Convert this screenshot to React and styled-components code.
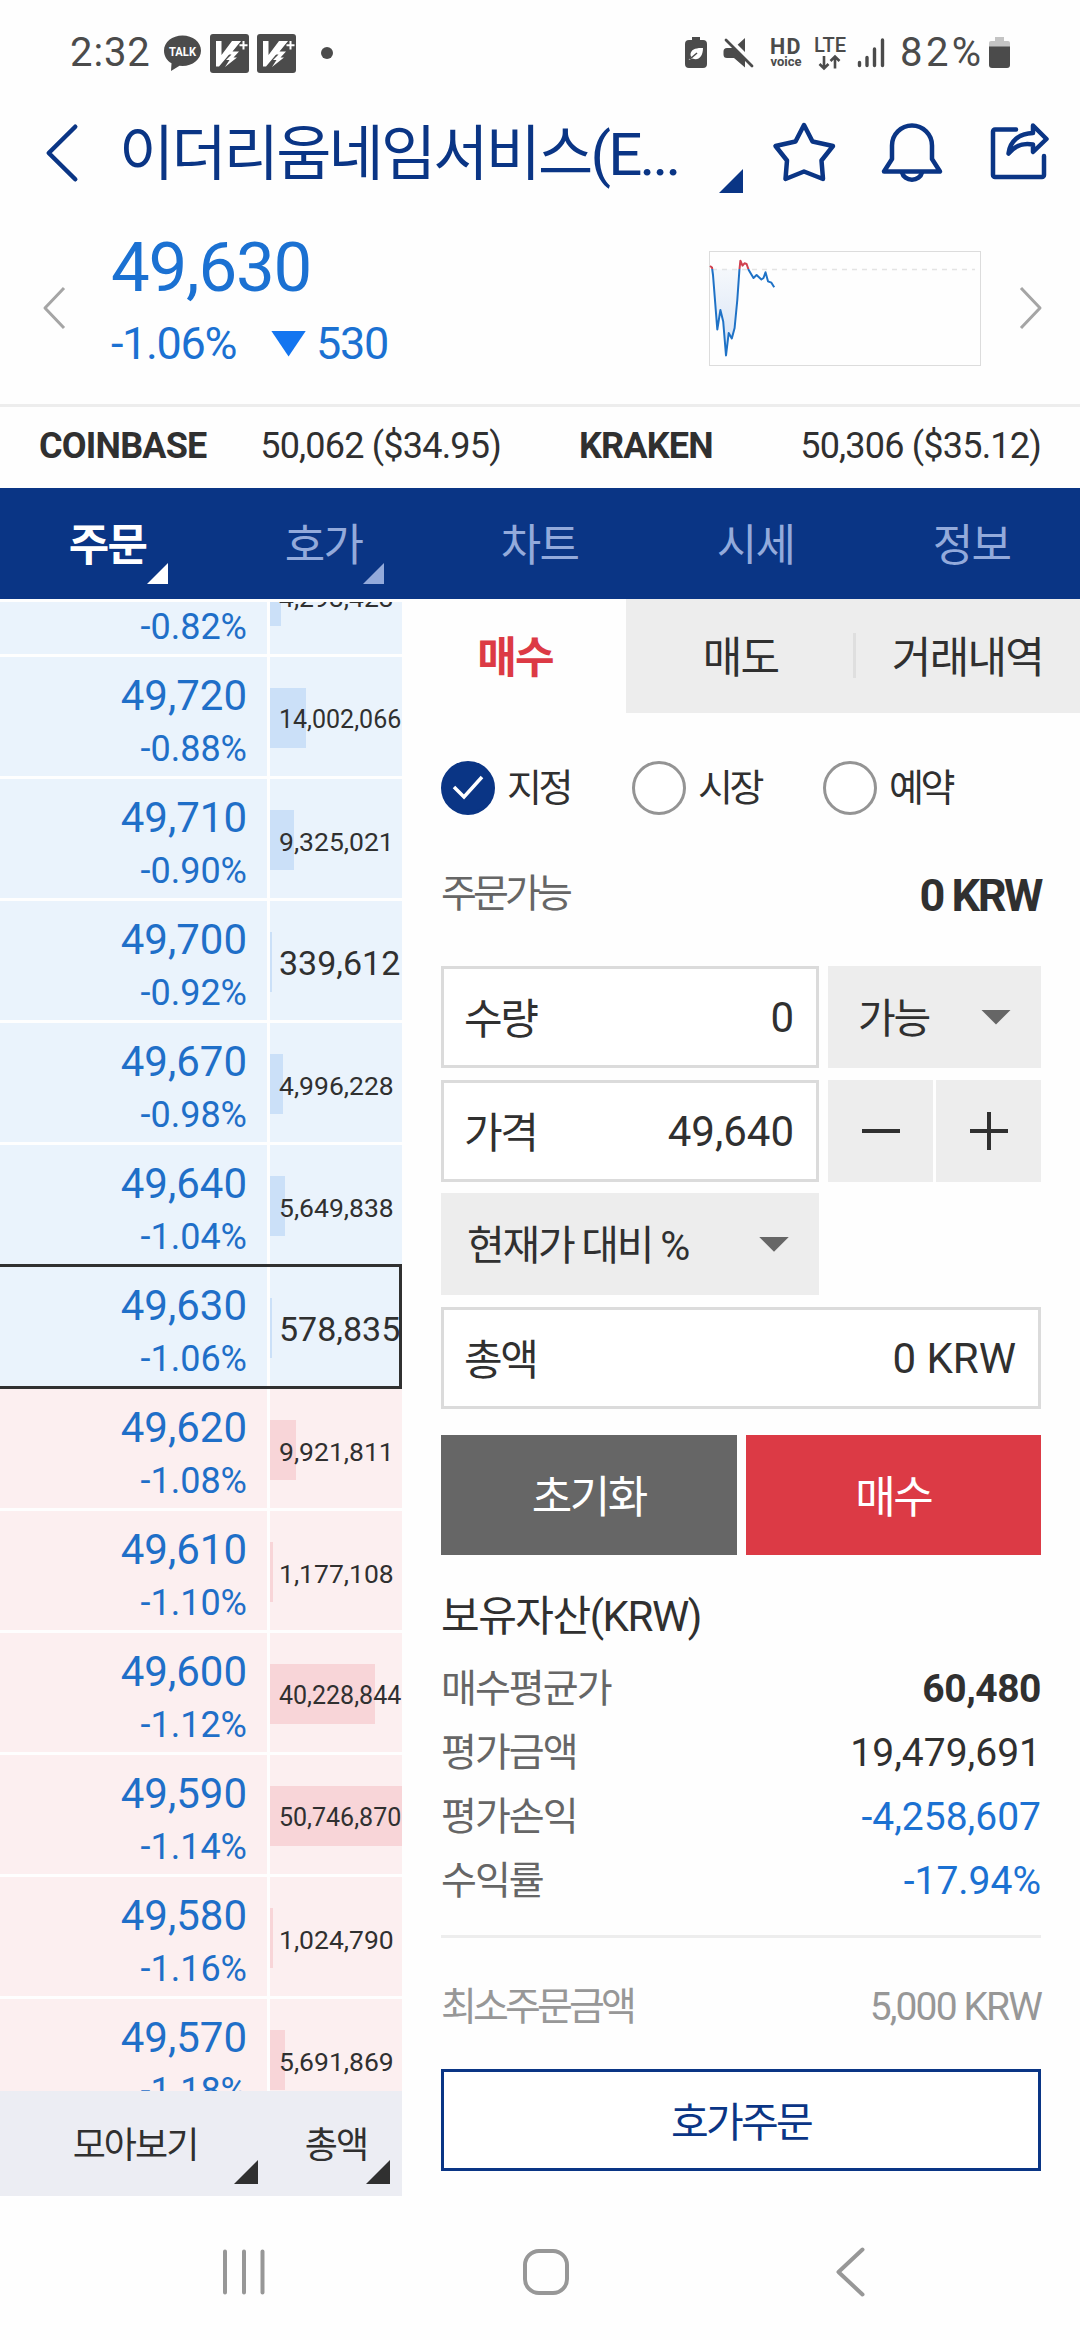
import { useState } from 'react';

import styled, { createGlobalStyle } from 'styled-components';

const GlobalStyle = createGlobalStyle`
  * {
    box-sizing: border-box;
  }

  body {
    margin: 0;
    background: #fdfdfd;
  }

  button {
    background: none;
    border: none;
    padding: 0;
    margin: 0;
    font: inherit;
    color: inherit;
    cursor: pointer;
  }

  svg {
    display: block;
    flex-shrink: 0;
    overflow: visible;
  }
`;

const Screen = styled.div`
  --navy: #0a3585;
  --blue: #1b71d2;
  --red: #dc3a45;
  --ink: #303030;

  display: flex;
  flex-direction: column;
  width: 1080px;
  height: 2340px;
  overflow: hidden;
  background: #fefefe;
  color: var(--ink);
  font-family: Roboto, 'Noto Sans CJK KR', sans-serif;
`;

/* ---------- status bar ---------- */

const StatusBar = styled.div`
  display: flex;
  align-items: center;
  justify-content: space-between;
  height: 106px;
  padding: 0 70px 0 70px;
  color: #4b4b4b;
`;

const StatusGroup = styled.div`
  display: flex;
  align-items: center;
`;

const StatusText = styled.span`
  font-size: 40px;
  line-height: 40px;
  letter-spacing: ${({ $spacing }) => $spacing}px;
  width: ${({ $width }) => $width}px;
  white-space: nowrap;
`;

const IconSlot = styled.span`
  display: flex;
  margin-left: ${({ $gap }) => $gap}px;
`;

const HdVoice = styled.span`
  display: flex;
  flex-direction: column;
  align-items: center;
  width: 34px;
  margin-left: 15px;
  font-weight: 700;
  font-size: 21.5px;
  line-height: 17px;
  letter-spacing: 1.5px;

  small {
    font-size: 13px;
    line-height: 13px;
    letter-spacing: 0;
  }
`;

/* ---------- title and price ---------- */

const TitleBar = styled.header`
  display: flex;
  align-items: center;
  height: 94px;
  padding: 0 27px 0 46px;
  color: var(--navy);
`;

const Title = styled.button`
  position: relative;
  width: 624px;
  height: 94px;
  margin-left: 41px;
  margin-right: 1px;
  font-size: 60px;
  line-height: 98px;
  letter-spacing: -0.047em;
  text-align: left;
  white-space: nowrap;
`;

const Corner = styled.i`
  position: absolute;
  right: ${({ $right = 0 }) => $right}px;
  bottom: ${({ $bottom = 0 }) => $bottom}px;
  width: ${({ $size = 24 }) => $size}px;
  height: ${({ $size = 24 }) => $size}px;
  background: currentColor;
  clip-path: polygon(100% 0, 100% 100%, 0 100%);
`;

const TitleActions = styled.div`
  display: flex;
  align-items: center;
  gap: 46px;
  margin-left: 29px;
`;

const PriceBar = styled.section`
  display: flex;
  align-items: center;
  height: 207px;
  padding: 12px 38px 0 43px;
  border-bottom: 3px solid #ededed;
`;

const PriceBlock = styled.div`
  flex: 1;
  margin: 0 0 5px 45px;
  color: var(--blue);
`;

const Price = styled.div`
  font-size: 69px;
  line-height: 76px;
  letter-spacing: -0.018em;
`;

const PriceChange = styled.div`
  display: flex;
  align-items: center;
  font-size: 45px;
  line-height: 76px;
  letter-spacing: -0.03em;
`;

const DownArrow = styled.i`
  width: ${({ $width }) => $width}px;
  height: ${({ $height }) => $height}px;
  background: ${({ $color }) => $color};
  clip-path: polygon(0 0, 100% 0, 50% 100%);
`;

const ExchangeBar = styled.section`
  display: flex;
  height: 81px;
`;

const Exchange = styled.div`
  display: flex;
  justify-content: space-between;
  width: 540px;
  padding: 0 39px;
  font-size: 36px;
  line-height: 78px;
  letter-spacing: -0.022em;
`;

/* ---------- main tabs ---------- */

const MainTabs = styled.nav`
  display: flex;
  height: 111px;
  background: var(--navy);
`;

const MainTab = styled.button`
  position: relative;
  flex: 1;
  height: 111px;
  padding: 3px 1px 0 0;
  font-size: 44px;
  line-height: 111px;
  letter-spacing: -0.04em;
  font-weight: ${({ $active }) => ($active ? 700 : 400)};
  color: ${({ $active }) => ($active ? '#fff' : '#93aadb')};
`;

const Body = styled.main`
  display: flex;
  height: 1597px;
`;

/* ---------- order book ---------- */

const Book = styled.section`
  display: flex;
  flex-direction: column;
  width: 402px;
  padding-top: 3px;
`;

const BookClip = styled.div`
  height: 1489px;
  overflow: hidden;
`;

const BookList = styled.div`
  display: flex;
  flex-direction: column;
  gap: 3px;
  margin-top: -67px;
`;

const BookRow = styled.div`
  position: relative;
  display: grid;
  grid-template-columns: 267px 132px;
  column-gap: 3px;
  height: 119px;
  flex-shrink: 0;
`;

const CurrentFrame = styled.div`
  position: absolute;
  inset: -3px 0 -3px -3px;
  border: 3px solid #303030;
`;

const PriceCell = styled.div`
  display: flex;
  flex-direction: column;
  align-items: flex-end;
  padding: 13px 20px 0 0;
  background: ${({ $side }) => ($side === 'ask' ? '#eaf3fc' : '#fceff0')};
  color: #1f6fc8;
`;

const RowPrice = styled.span`
  height: 52px;
  font-size: 42px;
  line-height: 52px;
`;

const RowRate = styled.span`
  font-size: 36px;
  line-height: 54px;
`;

const VolumeCell = styled.div`
  position: relative;
  display: flex;
  align-items: center;
  padding: 5px 0 0 9px;
  background: ${({ $side }) => ($side === 'ask' ? '#eaf3fc' : '#fceff0')};
  font-size: ${({ $length }) => (
    $length > 9 ? 25 : $length > 7 ? 26.5 : 34
  )}px;
  overflow: hidden;
`;

const VolumeBar = styled.i`
  position: absolute;
  left: 0;
  top: 31px;
  height: 60px;
  background: ${({ $side }) => ($side === 'ask' ? '#cbe0f8' : '#f8d5d8')};
`;

const VolumeText = styled.span`
  position: relative;
`;

const BookFooter = styled.div`
  display: flex;
  height: 105px;
  background: #ecedf3;
`;

const FooterButton = styled.button`
  position: relative;
  width: ${({ $width }) => $width}px;
  height: 105px;
  padding-top: 3px;
  font-size: 36px;
  line-height: 105px;
  letter-spacing: -0.055em;
`;

/* ---------- order form ---------- */

const OrderPanel = styled.section`
  flex: 1;
`;

const SideTabs = styled.div`
  display: flex;
  height: 114px;
`;

const SideTab = styled.button`
  position: relative;
  flex: ${({ $active }) => ($active ? '0 0 224px' : '1')};
  padding: 0 0 4px 2px;
  background: ${({ $active }) => ($active ? 'transparent' : '#ededed')};
  color: ${({ $active }) => ($active ? 'var(--red)' : 'inherit')};
  font-size: 43px;
  font-weight: ${({ $active }) => ($active ? 700 : 400)};
  letter-spacing: -0.04em;
`;

const TabDivider = styled.i`
  position: absolute;
  left: 0;
  top: 34px;
  width: 3px;
  height: 45px;
  background: #dfdfdf;
`;

const OrderForm = styled.div`
  padding: 0 39px;
`;

const OrderTypes = styled.div`
  display: flex;
  margin-top: 48px;
`;

const OrderType = styled.button`
  display: flex;
  align-items: center;
  gap: 12px;
  width: 191px;
  height: 54px;
  font-size: 38px;
  line-height: 58px;
  letter-spacing: -0.09em;
`;

const Radio = styled.span`
  display: flex;
  align-items: center;
  justify-content: center;
  width: 54px;
  height: 54px;
  border: 3px solid ${({ $checked }) => ($checked ? 'var(--navy)' : '#949494')};
  border-radius: 50%;
  background: ${({ $checked }) => ($checked ? 'var(--navy)' : '#fff')};
`;

const Available = styled.div`
  display: flex;
  justify-content: space-between;
  align-items: center;
  margin: 51px 0 42px;
  height: 58px;
  font-size: 39px;
  letter-spacing: -0.1em;
  color: #666;

  span {
    margin-bottom: 11px;
  }

  strong {
    font-size: 45px;
    letter-spacing: -0.055em;
    color: var(--ink);
  }
`;

const Fields = styled.div`
  display: grid;
  grid-template-columns: 378px 213px;
  column-gap: 9px;
  row-gap: 11.67px;
`;

const Field = styled.label`
  display: flex;
  align-items: center;
  justify-content: space-between;
  grid-column: ${({ $wide }) => ($wide ? '1 / -1' : 'auto')};
  height: 102px;
  padding: 1px 22px 0 20px;
  border: 3px solid #dbdbdb;
  font-size: 42px;
  background: #fff;
`;

const FieldLabel = styled.span`
  margin-bottom: 4px;
  letter-spacing: -0.055em;
  white-space: pre;
`;

const Select = styled.button`
  display: flex;
  align-items: center;
  justify-content: space-between;
  height: 102px;
  padding: 0 30px 0 ${({ $left }) => $left}px;
  background: #ededed;
  font-size: 41px;
`;

const Stepper = styled.div`
  display: grid;
  grid-template-columns: 1fr 1fr;
  gap: 3px;
`;

const StepButton = styled.button`
  display: flex;
  align-items: center;
  justify-content: center;
  background: #ededed;
`;

const Actions = styled.div`
  display: grid;
  grid-template-columns: 1fr 1fr;
  gap: 9px;
  margin-top: 26px;
`;

const ActionButton = styled.button`
  height: 120px;
  padding-bottom: 2px;
  font-size: 44px;
  letter-spacing: -0.055em;
  background: ${({ $primary }) => ($primary ? 'var(--red)' : '#666')};
  color: #fff;
`;

const HoldingsTitle = styled.h2`
  margin: 31px 0 9px;
  font-size: 42px;
  line-height: 62px;
  font-weight: 400;
  letter-spacing: -0.035em;
`;

const InfoRow = styled.div`
  display: flex;
  justify-content: space-between;
  font-size: 39px;
  line-height: 64px;
  color: ${({ $muted }) => ($muted ? '#979797' : '#666')};
  letter-spacing: ${({ $muted }) => ($muted ? '-0.1em' : '-0.05em')};
`;

const InfoValue = styled.span`
  color: ${({ $color }) => $color};
  font-weight: ${({ $bold }) => ($bold ? 700 : 400)};
  letter-spacing: ${({ $tight, $bold }) => (
    $tight ? '-0.048em' : $bold ? '-0.012em' : '0'
  )};
`;

const Divider = styled.hr`
  height: 3px;
  margin: 22px 0 37px;
  border: none;
  background: #ededed;
`;

const BookOrderButton = styled.button`
  display: block;
  width: 100%;
  height: 102px;
  margin-top: 30px;
  padding-bottom: 2px;
  border: 3px solid var(--navy);
  color: var(--navy);
  background: #fff;
  font-size: 41px;
  letter-spacing: -0.065em;
`;

/* ---------- system navigation ---------- */

const SystemNav = styled.footer`
  display: flex;
  align-items: center;
  height: 144px;
  padding: 8px 0 0 221px;
`;

const SystemButton = styled.button`
  margin-right: ${({ $gap = 0 }) => $gap}px;
`;

const MAX_VOLUME = 50746870;

// the first row is scrolled half out of view, only its rate shows
const orders = [
  { side: 'ask', rate: '-0.82%', volume: 4293423 },
  { side: 'ask', price: '49,720', rate: '-0.88%', volume: 14002066 },
  { side: 'ask', price: '49,710', rate: '-0.90%', volume: 9325021 },
  { side: 'ask', price: '49,700', rate: '-0.92%', volume: 339612 },
  { side: 'ask', price: '49,670', rate: '-0.98%', volume: 4996228 },
  { side: 'ask', price: '49,640', rate: '-1.04%', volume: 5649838 },
  { side: 'ask', price: '49,630', rate: '-1.06%', volume: 578835 },
  { side: 'bid', price: '49,620', rate: '-1.08%', volume: 9921811 },
  { side: 'bid', price: '49,610', rate: '-1.10%', volume: 1177108 },
  { side: 'bid', price: '49,600', rate: '-1.12%', volume: 40228844 },
  { side: 'bid', price: '49,590', rate: '-1.14%', volume: 50746870 },
  { side: 'bid', price: '49,580', rate: '-1.16%', volume: 1024790 },
  { side: 'bid', price: '49,570', rate: '-1.18%', volume: 5691869 },
];

const holdings = [
  { label: '매수평균가', value: '60,480', color: '#303030', bold: true },
  { label: '평가금액', value: '19,479,691', color: '#303030' },
  { label: '평가손익', value: '-4,258,607', color: '#1b71d2' },
  { label: '수익률', value: '-17.94%', color: '#1b71d2' },
];

const mainTabs = ['주문', '호가', '차트', '시세', '정보'];
const sideTabs = ['매수', '매도', '거래내역'];
const orderTypes = ['지정', '시장', '예약'];

function TalkIcon() {
  return (
    <svg width="37" height="37" viewBox="0 0 37 37">
      <path
        d="M18.500 0.500C8.300 0.500 0 7.100 0 15.700c0 5.400 2.800 9.800 7.500 12.500L7 36l8.500-5.300 3 .2C28.700 30.900 37 24.300 37 15.700S28.700 0.500 18.500 0.500Z"
        fill="#4b4b4b"
      />
      <text
        x="5"
        y="20.500"
        fontSize="13"
        fontWeight="700"
        textLength="27"
        lengthAdjust="spacingAndGlyphs"
        fill="#fff"
      >
        TALK
      </text>
    </svg>
  );
}

function V3Icon() {
  return (
    <svg width="39" height="39" viewBox="0 0 39 39">
      <rect width="39" height="39" rx="3" fill="#4b4b4b" />
      <path d="M6 7h5.500v14L22 7h8.500L9 32.500H6Z" fill="#fff" />
      <path
        d="M31 7L22.500 17.500H29L23.500 23.500H27L15 33L19.500 26H16L21.500 20.500H16L27 7Z"
        fill="#fff"
      />
      <path d="M33.500 7v8.500M29.500 11.200h8" stroke="#4b4b4b" strokeWidth="4" />
      <path d="M33.500 7v8.500M29.500 11.200h8" stroke="#fff" strokeWidth="2" />
    </svg>
  );
}

function PowerSaveIcon() {
  return (
    <svg width="22" height="32" viewBox="0 0 22 32">
      <path
        d="M7 0h8v3h3a4 4 0 0 1 4 4v20a4 4 0 0 1-4 4H4a4 4 0 0 1-4-4V7a4 4 0 0 1 4-4h3Z"
        fill="#4b4b4b"
      />
      <path
        d="M18 11c-7-.5-12 1.500-12.500 6-.1 1.500.5 2.500 1 3L3.500 23l4-1.500C13 24 18 20 18 11Z"
        fill="#fff"
      />
      <path d="M5 22l7-6" stroke="#4b4b4b" strokeWidth="1.500" />
    </svg>
  );
}

function MuteIcon() {
  return (
    <svg width="31" height="30" viewBox="0 0 31 30">
      <path
        d="M22 0v29.500L11 20H4a3.500 3.500 0 0 1-3.500-3.500v-3A3.500 3.500 0 0 1 4 10h7Z"
        fill="#4b4b4b"
      />
      <path d="M4.500-.5l28 28" stroke="#fefefe" strokeWidth="4" />
      <path
        d="M3 2l26 26"
        stroke="#4b4b4b"
        strokeWidth="2.800"
        strokeLinecap="round"
      />
    </svg>
  );
}

function LteIcon() {
  return (
    <svg width="32" height="34" viewBox="0 0 32 34" fill="#4b4b4b">
      <text
        x="0"
        y="15.500"
        fontSize="20.500"
        fontWeight="500"
        textLength="32"
        lengthAdjust="spacingAndGlyphs"
      >
        LTE
      </text>
      <path
        d="M10 20v12M5.500 28l4.500 4.500 4.500-4.500M21 32.500V20.500M16.500 25l4.500-4.500 4.500 4.500"
        stroke="#4b4b4b"
        strokeWidth="2.600"
        fill="none"
      />
    </svg>
  );
}

function SignalIcon() {
  return (
    <svg width="28" height="30" viewBox="0 0 28 30">
      <path
        d="M2.500 24.500v3M10 19.500v8M17.500 11v16.500M25.500 2v25.500"
        stroke="#4b4b4b"
        strokeWidth="3.400"
        strokeLinecap="round"
      />
    </svg>
  );
}

function BatteryIcon() {
  return (
    <svg width="21" height="32" viewBox="0 0 21 32">
      <path d="M6 0h9v4h4a2 2 0 0 1 2 2v4H0V6a2 2 0 0 1 2-2h4Z" fill="#c4c4c4" />
      <path d="M0 9.500h21V28a3 3 0 0 1-3 3H3a3 3 0 0 1-3-3Z" fill="#4b4b4b" />
    </svg>
  );
}

function ChevronIcon({ width, height, stroke, color, right, cap = 'round' }) {
  const inset = stroke / 2 + 0.5;
  const near = right ? inset : width - inset;
  const far = right ? width - inset : inset;
  return (
    <svg width={width} height={height}>
      <path
        d={`M${near} ${inset}L${far} ${height / 2}L${near} ${height - inset}`}
        stroke={color}
        strokeWidth={stroke}
        strokeLinecap={cap}
        strokeLinejoin="round"
        fill="none"
      />
    </svg>
  );
}

function StarIcon() {
  return (
    <svg width="62" height="62" viewBox="0 0 62 62">
      <path
        d="M31 3L39.500 19.500L60 24L48.500 38.500L50 57L31 49.500L12.500 57L14 38.500L2.500 24L22.500 19.500Z"
        stroke="currentColor"
        strokeWidth="4.500"
        strokeLinejoin="round"
        fill="none"
      />
    </svg>
  );
}

function BellIcon() {
  return (
    <svg width="62" height="62" viewBox="0 0 62 62">
      <g
        stroke="currentColor"
        strokeWidth="4.500"
        strokeLinejoin="round"
        fill="none"
      >
        <path d="M11 37V23.500a20 20 0 0 1 40 0V37L59 49.500H3Z" />
        <path d="M21 50.500a10.200 9 0 0 0 20 0" />
      </g>
    </svg>
  );
}

function ShareIcon() {
  return (
    <svg width="62" height="62" viewBox="0 0 62 62">
      <g
        stroke="currentColor"
        strokeWidth="4.500"
        strokeLinejoin="round"
        strokeLinecap="round"
        fill="none"
      >
        <path d="M27 7.500H6a2 2 0 0 0-2 2V53a2 2 0 0 0 2 2h47a2 2 0 0 0 2-2V34" />
        <path d="M44 3.500L57.500 17L44 30V22.500C34 20.500 26 23.500 19.500 31.500C21 19 30 11.500 44 11Z" />
      </g>
    </svg>
  );
}

function MiniChart() {
  return (
    <svg width="272" height="115" viewBox="0 0 272 115">
      <defs>
        <linearGradient id="dip" x1="0" y1="0" x2="0" y2="1">
          <stop offset="0" stopColor="#dfe9f6" stopOpacity="0.3" />
          <stop offset="1" stopColor="#cfdff5" />
        </linearGradient>
        <clipPath id="above">
          <rect width="272" height="18" />
        </clipPath>
        <clipPath id="below">
          <rect y="18" width="272" height="97" />
        </clipPath>
        <path
          id="line"
          d="M1 15L3 16.500L4 24L8.300 78.500L11.400 59L14.200 70.500L17 104.500L19.700 82L22.800 87.500L25.600 77L28.300 49L30.400 19L31.400 9.700L33.500 14.700L35.500 12.300L37.600 13L39.700 19L44.500 27L47.600 24L52.400 28.500L54.500 27L56.500 21.300L59 30.300L62.400 31.700L65.200 36.300"
        />
      </defs>
      <rect
        x="0.500"
        y="0.500"
        width="271"
        height="114"
        fill="none"
        stroke="#dcdcdc"
      />
      <path
        d="M3 18.500H266"
        stroke="#e4e4e4"
        strokeWidth="1.500"
        strokeDasharray="5 5"
      />
      <path
        d="M3.500 18.500L8.300 78.500L11.400 59L14.200 70.500L17 104.500L19.700 82L22.800 87.500L25.600 77L28.300 49L30.400 18.500Z"
        fill="url(#dip)"
      />
      <g fill="none" strokeWidth="2" strokeLinejoin="round">
        <use href="#line" stroke="#d0404e" clipPath="url(#above)" />
        <use href="#line" stroke="#1f72c6" clipPath="url(#below)" />
      </g>
    </svg>
  );
}

function OrderBook() {
  return (
    <Book>
      <BookClip>
        <BookList>
          {orders.map(({ side, price, rate, volume }) => {
            const text = volume.toLocaleString('en-US');
            return (
              <BookRow key={rate}>
                <PriceCell $side={side}>
                  <RowPrice>{price}</RowPrice>
                  <RowRate>{rate}</RowRate>
                </PriceCell>
                <VolumeCell $side={side} $length={text.length}>
                  <VolumeBar
                    $side={side}
                    style={{ width: Math.max(1.5, (volume / MAX_VOLUME) * 132) }}
                  />
                  <VolumeText>{text}</VolumeText>
                </VolumeCell>
                {price === '49,630' && <CurrentFrame />}
              </BookRow>
            );
          })}
        </BookList>
      </BookClip>
      <BookFooter>
        <FooterButton $width={270}>
          모아보기
          <Corner $right={12} $bottom={12} />
        </FooterButton>
        <FooterButton $width={132}>
          총액
          <Corner $right={12} $bottom={12} />
        </FooterButton>
      </BookFooter>
    </Book>
  );
}

function OrderEntry() {
  const [side, setSide] = useState('매수');
  const [type, setType] = useState('지정');

  return (
    <OrderPanel>
      <SideTabs>
        {sideTabs.map((name, i) => (
          <SideTab
            key={name}
            $active={name === side}
            onClick={() => setSide(name)}
          >
            {i === 2 && <TabDivider />}
            {name}
          </SideTab>
        ))}
      </SideTabs>

      <OrderForm>
        <OrderTypes>
          {orderTypes.map((name) => (
            <OrderType key={name} onClick={() => setType(name)}>
              <Radio $checked={name === type}>
                {name === type && (
                  <svg width="34" height="28" viewBox="0 0 34 28">
                    <path
                      d="M3 13L13 23L31 3"
                      stroke="#fff"
                      strokeWidth="3.500"
                      fill="none"
                    />
                  </svg>
                )}
              </Radio>
              {name}
            </OrderType>
          ))}
        </OrderTypes>

        <Available>
          <span>주문가능</span>
          <strong>0 KRW</strong>
        </Available>

        <Fields>
          <Field>
            <FieldLabel>수량</FieldLabel>
            <span>0</span>
          </Field>
          <Select $left={30}>
            <FieldLabel>가능</FieldLabel>
            <DownArrow $width={30} $height={15} $color="#666" />
          </Select>
          <Field>
            <FieldLabel>가격</FieldLabel>
            <span>49,640</span>
          </Field>
          <Stepper>
            <StepButton aria-label="minus">
              <svg width="38" height="38">
                <path d="M0 19H38" stroke="#303030" strokeWidth="4" />
              </svg>
            </StepButton>
            <StepButton aria-label="plus">
              <svg width="38" height="38">
                <path d="M0 19H38M19 0V38" stroke="#303030" strokeWidth="4" />
              </svg>
            </StepButton>
          </Stepper>
          <Select $left={26}>
            <FieldLabel>현재가 대비 %</FieldLabel>
            <DownArrow $width={30} $height={15} $color="#666" />
          </Select>
          <Field $wide>
            <FieldLabel>총액</FieldLabel>
            <span>0 KRW</span>
          </Field>
        </Fields>

        <Actions>
          <ActionButton>초기화</ActionButton>
          <ActionButton $primary>매수</ActionButton>
        </Actions>

        <HoldingsTitle>보유자산(KRW)</HoldingsTitle>
        {holdings.map(({ label, value, color, bold }) => (
          <InfoRow key={label}>
            {label}
            <InfoValue $color={color} $bold={bold}>
              {value}
            </InfoValue>
          </InfoRow>
        ))}
        <Divider />
        <InfoRow $muted>
          최소주문금액
          <InfoValue $color="#979797" $tight>
            5,000 KRW
          </InfoValue>
        </InfoRow>
        <BookOrderButton>호가주문</BookOrderButton>
      </OrderForm>
    </OrderPanel>
  );
}

export default function App() {
  const [tab, setTab] = useState('주문');

  return (
    <Screen>
      <GlobalStyle />
      <StatusBar>
        <StatusGroup>
          <StatusText $width={77} $spacing={0.9}>2:32</StatusText>
          <IconSlot $gap={17}>
            <TalkIcon />
          </IconSlot>
          <IconSlot $gap={9}>
            <V3Icon />
          </IconSlot>
          <IconSlot $gap={8}>
            <V3Icon />
          </IconSlot>
          <IconSlot $gap={25}>
            <svg width="12" height="12">
              <circle cx="6" cy="6" r="6" fill="#4b4b4b" />
            </svg>
          </IconSlot>
        </StatusGroup>
        <StatusGroup>
          <PowerSaveIcon />
          <IconSlot $gap={16}>
            <MuteIcon />
          </IconSlot>
          <HdVoice>
            HD
            <small>voice</small>
          </HdVoice>
          <IconSlot $gap={11}>
            <LteIcon />
          </IconSlot>
          <IconSlot $gap={11}>
            <SignalIcon />
          </IconSlot>
          <IconSlot $gap={15}>
            <StatusText $width={89} $spacing={3.4}>82%</StatusText>
          </IconSlot>
          <BatteryIcon />
        </StatusGroup>
      </StatusBar>

      <TitleBar>
        <ChevronIcon width={32} height={58} stroke={4.5} color="currentColor" />
        <Title>
          이더리움네임서비스(E...
          <Corner $bottom={7} />
        </Title>
        <TitleActions>
          <StarIcon />
          <BellIcon />
          <ShareIcon />
        </TitleActions>
      </TitleBar>

      <PriceBar>
        <ChevronIcon width={23} height={44} stroke={3} color="#a5a5a5" cap="butt" />
        <PriceBlock>
          <Price>49,630</Price>
          <PriceChange>
            <span>-1.06%</span>
            <IconSlot $gap={35}>
              <DownArrow $width={35} $height={26} $color="#1375f0" />
            </IconSlot>
            <IconSlot $gap={10}>530</IconSlot>
          </PriceChange>
        </PriceBlock>
        <MiniChart />
        <IconSlot $gap={38}>
          <ChevronIcon
            width={23}
            height={44}
            stroke={3}
            color="#a5a5a5"
            cap="butt"
            right
          />
        </IconSlot>
      </PriceBar>

      <ExchangeBar>
        <Exchange>
          <b>COINBASE</b>
          <span>50,062 ($34.95)</span>
        </Exchange>
        <Exchange>
          <b>KRAKEN</b>
          <span>50,306 ($35.12)</span>
        </Exchange>
      </ExchangeBar>

      <MainTabs>
        {mainTabs.map((name, i) => (
          <MainTab key={name} $active={name === tab} onClick={() => setTab(name)}>
            {name}
            {i < 2 && <Corner $size={21} $right={48} $bottom={15} />}
          </MainTab>
        ))}
      </MainTabs>

      <Body>
        <OrderBook />
        <OrderEntry />
      </Body>

      <SystemNav>
        <SystemButton $gap={255} aria-label="recents">
          <svg width="46" height="48">
            <path
              d="M4 3.500V44.500M23 3.500V44.500M41.500 3.500V44.500"
              stroke="#979797"
              strokeWidth="4"
              strokeLinecap="round"
            />
          </svg>
        </SystemButton>
        <SystemButton $gap={266} aria-label="home">
          <svg width="48" height="48">
            <rect
              x="3"
              y="3"
              width="42"
              height="42"
              rx="14"
              stroke="#979797"
              strokeWidth="4"
              fill="none"
            />
          </svg>
        </SystemButton>
        <SystemButton aria-label="back">
          <ChevronIcon width={29} height={50} stroke={4} color="#979797" />
        </SystemButton>
      </SystemNav>
    </Screen>
  );
}
